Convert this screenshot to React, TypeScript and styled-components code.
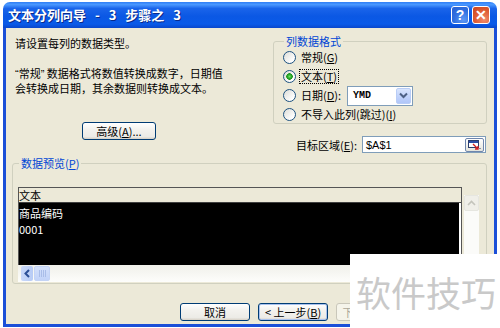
import React from "react";
import styled, { createGlobalStyle, css } from "styled-components";

const Global = createGlobalStyle`
  html, body { margin: 0; padding: 0; background: #fff; }
  body {
    font-family: "Noto Sans CJK SC", "Liberation Sans", sans-serif;
    font-size: 11px;
    color: #000;
  }
  * { box-sizing: border-box; }
  u { text-decoration: underline; text-underline-offset: 1px; }
`;

const Stage = styled.div`
  position: relative;
  width: 500px;
  height: 328px;
  overflow: hidden;
  background: #fff;
  padding: 2px 0 0 3px;
`;

const Window = styled.div`
  width: 494px;
  height: 325px;
  display: flex;
  flex-direction: column;
`;

const TitleBar = styled.div`
  flex: none;
  height: 26px;
  border-radius: 7px 7px 0 0;
  background: linear-gradient(
    to bottom,
    #2f7ef5 0%,
    #4a98ff 10%,
    #1a64ea 25%,
    #0b58e4 55%,
    #0a5ae8 85%,
    #0a47cc 100%
  );
  display: flex;
  align-items: center;
  padding: 0 7px 0 5px;
  gap: 3px;
`;

const Title = styled.div`
  flex: 1;
  color: #fff;
  font-weight: bold;
  font-size: 13px;
  white-space: pre;
  word-spacing: 6px;
  text-shadow: 1px 1px 0 #0a2a8a;
  line-height: 16px;
`;

const CaptionButton = styled.div<{ $kind: "help" | "close" }>`
  width: 18px;
  height: 18px;
  border: 1px solid #fff;
  border-radius: 3px;
  display: flex;
  align-items: center;
  justify-content: center;
  color: #fff;
  font-family: "Liberation Sans", sans-serif;
  font-weight: bold;
  font-size: 14px;
  ${(p) =>
    p.$kind === "help"
      ? css`
          background: radial-gradient(circle at 70% 80%, #5e98f5 0%, #2f6fe0 55%, #2a5fd0 100%);
        `
      : css`
          background: radial-gradient(circle at 70% 80%, #f08a6a 0%, #de5a32 55%, #c9441e 100%);
        `}
`;

const Body = styled.div`
  flex: 1;
  background: #ece9d8;
  border: 3px solid #1b4fd8;
  border-top: none;
  display: flex;
  flex-direction: column;
  padding: 0 7px 3px 6px;
`;

const TopRow = styled.div`
  flex: none;
  height: 128px;
  display: grid;
  grid-template-columns: 1fr 214px;
`;

const LeftCol = styled.div`
  display: flex;
  flex-direction: column;
  align-items: flex-start;
  padding-left: 3px;
`;

const Instruction = styled.div`
  margin-top: 8px;
  line-height: 14px;
`;

const Explanation = styled.div`
  margin-top: 16px;
  line-height: 14px;
  white-space: nowrap;
`;

const Quote = styled.span`
  font-family: "Liberation Sans", sans-serif;
`;

const Button = styled.div<{ $w?: number; $disabled?: boolean; $default?: boolean }>`
  width: ${(p) => p.$w ?? 70}px;
  height: 18px;
  border: 1px solid #003c74;
  border-radius: 3px;
  background: linear-gradient(to bottom, #ffffff 0%, #f3f2ee 40%, #ecebe6 85%, #d6d0c5 100%);
  display: flex;
  align-items: center;
  justify-content: center;
  line-height: 14px;
  white-space: pre;
  ${(p) =>
    p.$default &&
    css`
      box-shadow: inset 0 0 0 1px #a9c2ee;
    `}
  ${(p) =>
    p.$disabled &&
    css`
      border-color: #c9c7ba;
      background: #f5f4ea;
      color: #aca899;
    `}
`;

const AdvancedButton = styled(Button)`
  margin-top: 27px;
  margin-left: 67px;
`;

const RightCol = styled.div`
  display: flex;
  flex-direction: column;
`;

const Group = styled.fieldset`
  margin: 0;
  min-width: 0;
  border: 1px solid #d0d0bf;
  border-radius: 3px;
`;

const Legend = styled.legend`
  padding: 0 2px;
  margin-left: 1px;
  line-height: 14px;
  color: #0046d5;
`;

const FormatGroup = styled(Group)`
  margin-top: 6px;
  padding: 0 0 0 9px;
`;

const RadioRow = styled.div<{ $h?: number }>`
  height: ${(p) => p.$h ?? 19}px;
  display: flex;
  align-items: center;
  gap: 3px;
  white-space: nowrap;
`;

const RadioCircle = styled.span<{ $checked?: boolean }>`
  flex: none;
  width: 13px;
  height: 13px;
  border-radius: 50%;
  border: 1px solid #1c5180;
  background: ${(p) =>
    p.$checked
      ? "radial-gradient(circle at 50% 50%, #6fe36b 0px, #2aa82a 2px, #1e931e 3px, transparent 3.5px), linear-gradient(135deg, #dcdcd7 0%, #ffffff 80%)"
      : "linear-gradient(135deg, #dcdcd7 0%, #ffffff 80%)"};
`;

const RadioLabel = styled.span<{ $focus?: boolean }>`
  line-height: 13px;
  padding: 0 1px;
  border: 1px dotted ${(p) => (p.$focus ? "#000" : "transparent")};
`;

const Combo = styled.div`
  margin-left: 1px;
  width: 66px;
  height: 20px;
  border: 1px solid #7f9db9;
  background: #fff;
  display: flex;
  align-items: center;
  padding: 1px;
`;

const ComboText = styled.span`
  flex: 1;
  padding-left: 4px;
  font-family: "Liberation Mono", monospace;
  font-weight: bold;
  font-size: 10px;
`;

const ComboButton = styled.span`
  width: 15px;
  height: 16px;
  border: 1px solid #b9cdf6;
  border-radius: 2px;
  background: linear-gradient(to bottom, #d9e5fd 0%, #bed1fb 60%, #b0c6f8 100%);
  display: flex;
  align-items: center;
  justify-content: center;
`;

const TargetRow = styled.div`
  margin-top: 12px;
  display: flex;
  justify-content: flex-end;
  align-items: center;
  gap: 5px;
  padding-right: 1px;
`;

const TargetInput = styled.div`
  width: 124px;
  height: 17px;
  border: 1px solid #7f9db9;
  background: #fff;
  display: flex;
  align-items: center;
  padding: 0 1px 0 3px;
`;

const InputText = styled.span`
  flex: 1;
  font-family: "Liberation Sans", sans-serif;
  font-size: 11px;
`;

const PickButton = styled.span`
  width: 19px;
  height: 14px;
  border: 1px solid #6f86ad;
  border-radius: 2px;
  background: linear-gradient(to bottom, #ffffff, #e4e4dc);
  display: flex;
  align-items: center;
  justify-content: center;
`;

const PreviewGroup = styled(Group)`
  padding: 17px 5px 1px 5px;
`;

const PreviewGrid = styled.div`
  display: grid;
  grid-template-columns: 444px 17px;
  grid-template-rows: 78px 17px;
  column-gap: 2px;
`;

const DataFrame = styled.div`
  grid-column: 1;
  grid-row: 1;
  border: 1px solid #555;
  border-bottom: none;
  display: flex;
  flex-direction: column;
  min-width: 0;
`;

const DataHeader = styled.div`
  height: 15px;
  flex: none;
  background: #ece9d8;
  line-height: 14px;
  border-bottom: 1px solid #404040;
`;

const DataBody = styled.div`
  flex: 1;
  background: #000;
  color: #fff;
  border-right: 2px solid #fff;
  padding-top: 2px;
  line-height: 16px;
`;

const VScroll = styled.div`
  grid-column: 2;
  grid-row: 1 / span 2;
  margin-top: 8px;
  width: 15px;
  background: #fbfbf9;
  display: flex;
  flex-direction: column;
`;

const VArrow = styled.div`
  height: 16px;
  border: 1px solid #e6e6e0;
  border-radius: 2px;
  background: #f0efe9;
  display: flex;
  align-items: center;
  justify-content: center;
`;

const HScroll = styled.div`
  grid-column: 1;
  grid-row: 2;
  display: flex;
  align-items: center;
  padding: 1px 0 1px 3px;
  gap: 1px;
  background: linear-gradient(to bottom, #f0f0ea, #fdfdfb);
`;

const HArrow = styled.div`
  width: 12px;
  height: 15px;
  border-radius: 2px;
  background: linear-gradient(to right, #c9d8f9, #b7cbf5);
  display: flex;
  align-items: center;
  justify-content: center;
`;

const HThumb = styled.div`
  width: 16px;
  height: 15px;
  border-radius: 2px;
  border: 1px solid #c3d3f5;
  background: linear-gradient(to bottom, #d3e0fb, #c2d3f8);
  display: flex;
  align-items: center;
  justify-content: center;
  gap: 1px;
`;

const Grip = styled.span`
  width: 1px;
  height: 7px;
  background: #a9bde8;
`;

const ButtonRow = styled.div`
  margin-top: auto;
  display: flex;
  justify-content: flex-end;
  gap: 8px;
  padding-right: 3px;
`;

const Watermark = styled.div`
  position: absolute;
  left: 350px;
  top: 254px;
  width: 150px;
  height: 74px;
  background: #fff;
  display: flex;
  align-items: center;
  justify-content: center;
  padding-left: 2px;
  font-size: 35px;
  line-height: 1;
  color: #c9c9c9;
`;

const ChevronDown = () => (
  <svg width="9" height="7" viewBox="0 0 9 7">
    <path d="M1 1.5 L4.5 5 L8 1.5" fill="none" stroke="#4d6185" strokeWidth="2" />
  </svg>
);

const ChevronUp = () => (
  <svg width="9" height="6" viewBox="0 0 9 6">
    <path d="M1 5 L4.5 1.5 L8 5" fill="none" stroke="#c4c4bc" strokeWidth="1.6" />
  </svg>
);

const ChevronLeft = () => (
  <svg width="6" height="9" viewBox="0 0 6 9">
    <path d="M5 1 L1.5 4.5 L5 8" fill="none" stroke="#2c4f96" strokeWidth="2" />
  </svg>
);

const PickIcon = () => (
  <svg width="13" height="10" viewBox="0 0 13 10">
    <rect x="0.5" y="0.5" width="10" height="7" fill="#fff" stroke="#2b3d6a" />
    <rect x="1" y="1" width="9" height="2" fill="#2b4fa8" />
    <path d="M5 4 L10 9 M10 6 L10 9 L7 9" fill="none" stroke="#d21f1f" strokeWidth="1.4" />
    <rect x="11.5" y="8" width="1" height="1" fill="#2b3d6a" />
  </svg>
);

export default function App() {
  return (
    <Stage>
      <Global />
      <Window>
        <TitleBar>
          <Title>文本分列向导 - 3 步骤之 3</Title>
          <CaptionButton $kind="help">?</CaptionButton>
          <CaptionButton $kind="close">✕</CaptionButton>
        </TitleBar>
        <Body>
          <TopRow>
            <LeftCol>
              <Instruction>请设置每列的数据类型。</Instruction>
              <Explanation>
                <Quote>“</Quote>常规<Quote>”</Quote> 数据格式将数值转换成数字，日期值
                <br />
                会转换成日期，其余数据则转换成文本。
              </Explanation>
              <AdvancedButton $w={74}>
                高级(<u>A</u>)...
              </AdvancedButton>
            </LeftCol>
            <RightCol>
              <FormatGroup>
                <Legend>列数据格式</Legend>
                <RadioRow>
                  <RadioCircle />
                  <RadioLabel>
                    常规(<u>G</u>)
                  </RadioLabel>
                </RadioRow>
                <RadioRow>
                  <RadioCircle $checked />
                  <RadioLabel $focus>
                    文本(<u>T</u>)
                  </RadioLabel>
                </RadioRow>
                <RadioRow>
                  <RadioCircle />
                  <RadioLabel>
                    日期(<u>D</u>):
                  </RadioLabel>
                  <Combo>
                    <ComboText>YMD</ComboText>
                    <ComboButton>
                      <ChevronDown />
                    </ComboButton>
                  </Combo>
                </RadioRow>
                <RadioRow $h={18}>
                  <RadioCircle />
                  <RadioLabel>
                    不导入此列(跳过)(<u>I</u>)
                  </RadioLabel>
                </RadioRow>
              </FormatGroup>
              <TargetRow>
                <span>
                  目标区域(<u>E</u>):
                </span>
                <TargetInput>
                  <InputText>$A$1</InputText>
                  <PickButton>
                    <PickIcon />
                  </PickButton>
                </TargetInput>
              </TargetRow>
            </RightCol>
          </TopRow>
          <PreviewGroup>
            <Legend>
              数据预览(<u>P</u>)
            </Legend>
            <PreviewGrid>
              <DataFrame>
                <DataHeader>文本</DataHeader>
                <DataBody>
                  <div>商品编码</div>
                  <div>0001</div>
                </DataBody>
              </DataFrame>
              <VScroll>
                <VArrow>
                  <ChevronUp />
                </VArrow>
              </VScroll>
              <HScroll>
                <HArrow>
                  <ChevronLeft />
                </HArrow>
                <HThumb>
                  <Grip />
                  <Grip />
                  <Grip />
                  <Grip />
                </HThumb>
              </HScroll>
            </PreviewGrid>
          </PreviewGroup>
          <ButtonRow>
            <Button>取消</Button>
            <Button $default>
              {"< "}上一步(<u>B</u>)
            </Button>
            <Button $disabled>下一步(N) &gt;</Button>
            <Button />
          </ButtonRow>
        </Body>
      </Window>
      <Watermark>软件技巧</Watermark>
    </Stage>
  );
}
